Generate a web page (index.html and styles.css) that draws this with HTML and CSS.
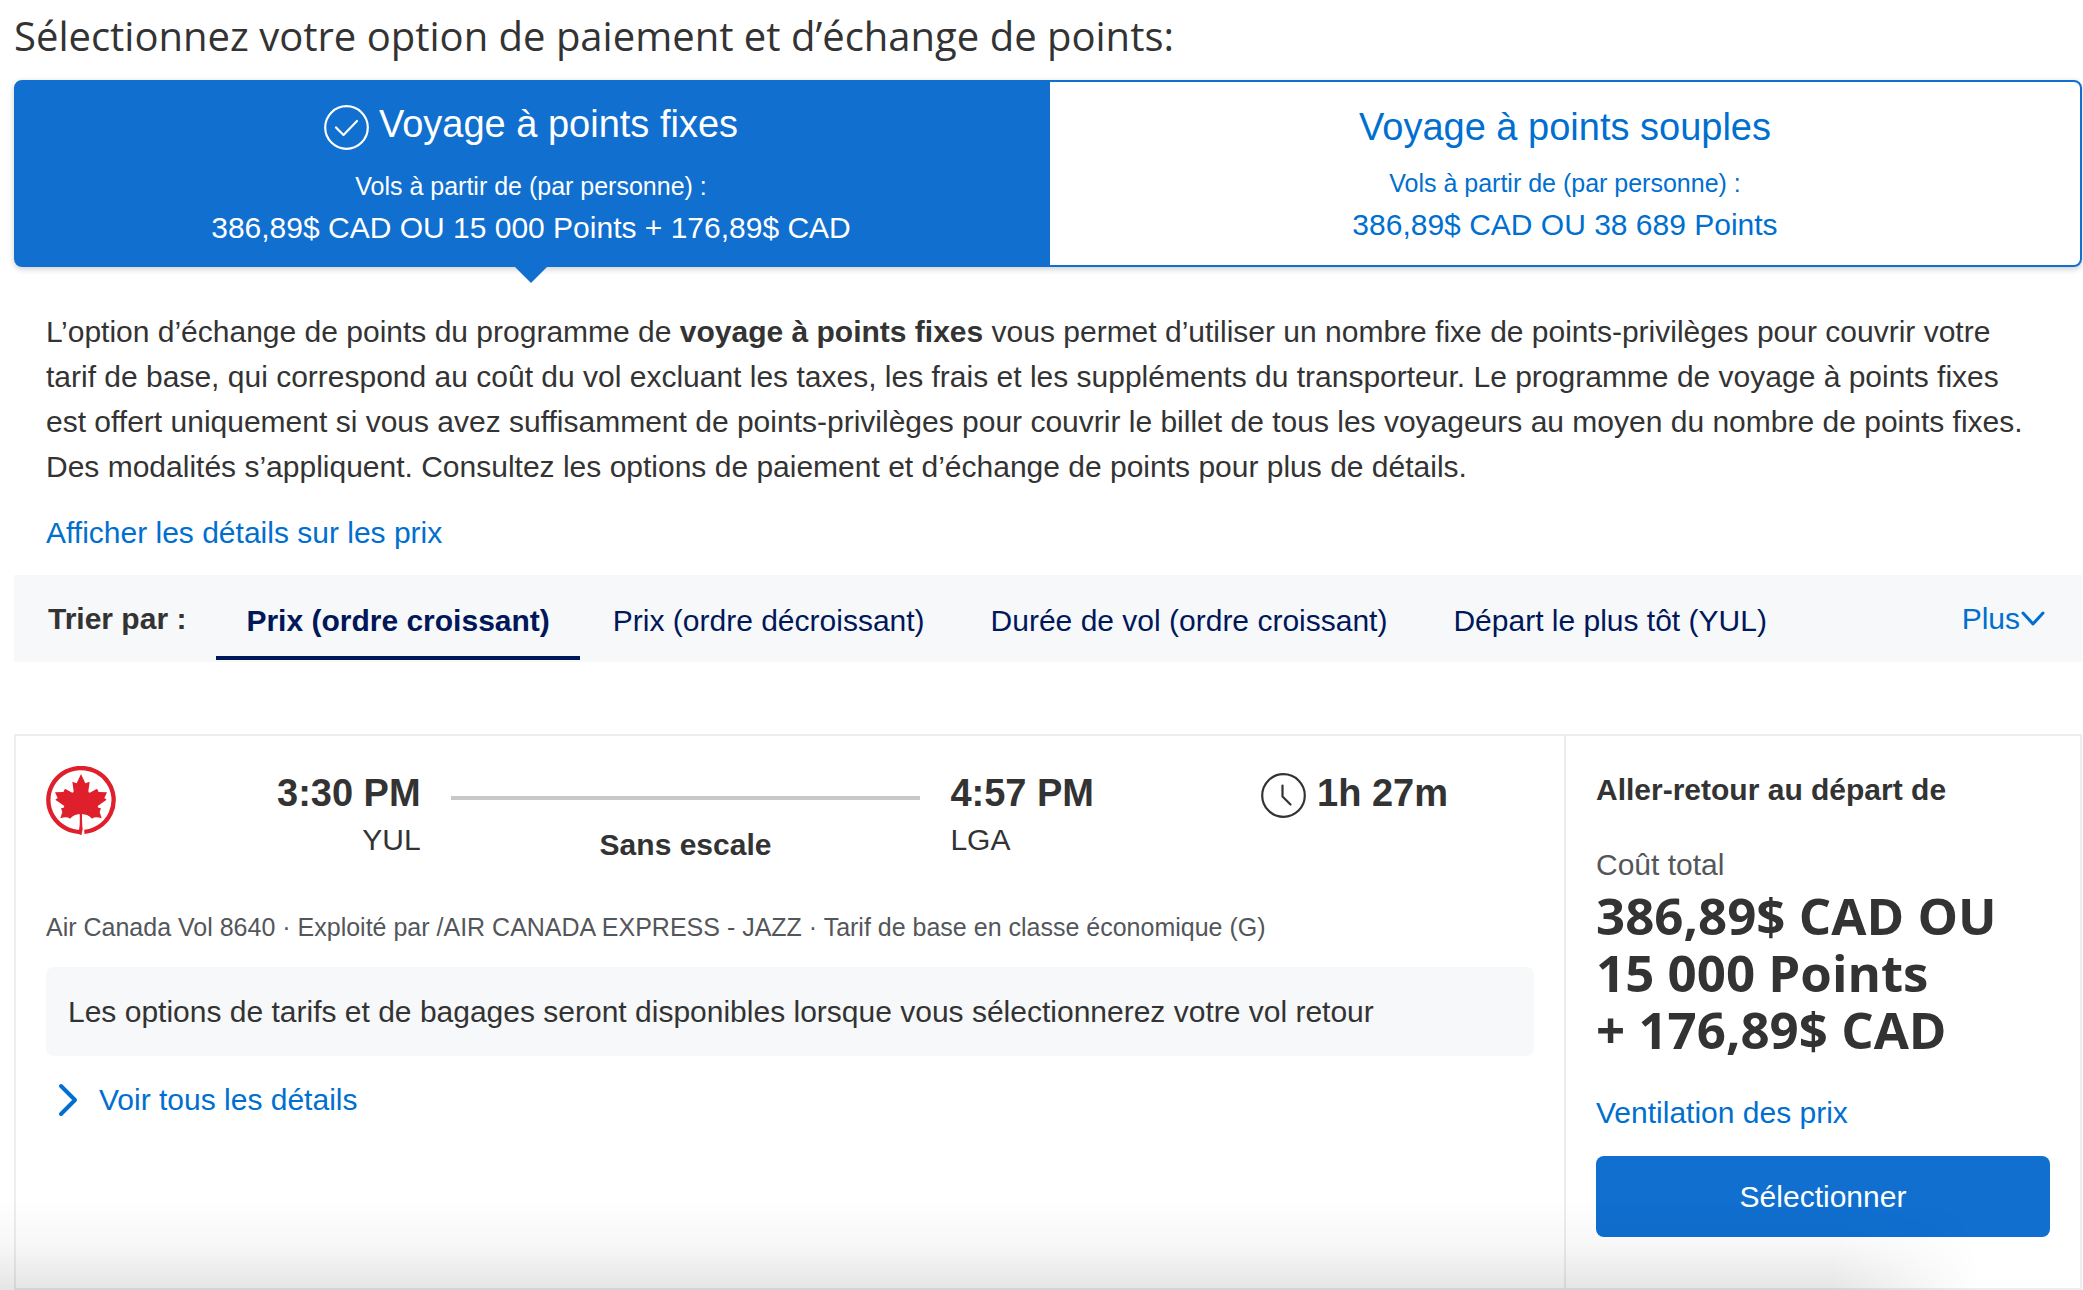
FILE: index.html
```html
<!DOCTYPE html>
<html lang="fr-CA">
<head>
  <meta charset="UTF-8">
  <meta name="viewport" content="width=device-width, initial-scale=1.0">
  <title>Résultats de vols</title>
  <link rel="stylesheet" href="styles.css">
</head>
<body>
  <h1 class="page-title">Sélectionnez votre option de paiement et d’échange de points:</h1>

  <div class="options">
    <button type="button" class="option option-active" aria-pressed="true">
      <span class="option-title">
        <svg class="icon-round" viewBox="0 0 45 45" aria-hidden="true">
          <circle cx="22.5" cy="22.5" r="21.3"/>
          <path d="M12 22.5l7.5 7.5 13.5-14"/>
        </svg>
        Voyage à points fixes
      </span>
      <span class="option-sub">Vols à partir de (par personne) :</span>
      <span class="option-price">386,89$ CAD OU 15 000 Points + 176,89$ CAD</span>
    </button>
    <button type="button" class="option" aria-pressed="false">
      <span class="option-title">Voyage à points souples</span>
      <span class="option-sub">Vols à partir de (par personne) :</span>
      <span class="option-price">386,89$ CAD OU 38 689 Points</span>
    </button>
  </div>

  <section class="description">
    <p>L’option d’échange de points du programme de <strong>voyage à points fixes</strong> vous permet d’utiliser un nombre fixe de points-privilèges pour couvrir votre tarif de base, qui correspond au coût du vol excluant les taxes, les frais et les suppléments du transporteur. Le programme de voyage à points fixes est offert uniquement si vous avez suffisamment de points-privilèges pour couvrir le billet de tous les voyageurs au moyen du nombre de points fixes. Des modalités s’appliquent. Consultez les options de paiement et d’échange de points pour plus de détails.</p>
    <a href="#">Afficher les détails sur les prix</a>
  </section>

  <nav class="sort-bar">
    <span class="sort-label">Trier par :</span>
    <button type="button" class="sort-tab sort-tab-active">Prix (ordre croissant)</button>
    <button type="button" class="sort-tab">Prix (ordre décroissant)</button>
    <button type="button" class="sort-tab">Durée de vol (ordre croissant)</button>
    <button type="button" class="sort-tab">Départ le plus tôt (YUL)</button>
    <button type="button" class="sort-more">Plus<svg viewBox="0 0 26 18" aria-hidden="true"><path d="M3 3l10 11 10-11"/></svg></button>
  </nav>

  <article class="flight">
    <div class="flight-main">
      <div class="flight-row">
        <svg class="airline-logo" viewBox="0 0 210 210" role="img" aria-label="Air Canada">
          <path class="logo-ring" d="M105 198A98 96 0 1 1 115 197.5"/>
          <path class="logo-leaf" d="M105 24L118 52L131 47L127 76Q128 82 134 79L153 68L158 78L183 79L175 96L182 101L155 120L157 125L165 127L161 138L167 157Q148 150 138 158Q126 145 108 144Q108 176 110 190L106 208L94 202Q103 196 101 144Q84 145 72 158Q62 150 43 157L49 138L45 127L53 125L55 120L28 101L35 96L27 79L52 78L57 68L76 79Q82 82 83 76L79 47L92 52Z"/>
        </svg>
        <div class="stop stop-from">
          <strong>3:30 PM</strong>
          <span>YUL</span>
        </div>
        <div class="route">
          <div class="route-line"></div>
          <strong>Sans escale</strong>
        </div>
        <div class="stop">
          <strong>4:57 PM</strong>
          <span>LGA</span>
        </div>
        <div class="duration">
          <svg class="icon-round" viewBox="0 0 45 45" aria-hidden="true">
            <circle cx="22.5" cy="22.5" r="21.3"/>
            <path d="M21.5 12.5v11l8 8"/>
          </svg>
          <strong>1h 27m</strong>
        </div>
      </div>
      <p class="flight-info">Air Canada Vol 8640 · Exploité par /AIR CANADA EXPRESS - JAZZ · Tarif de base en classe économique (G)</p>
      <p class="notice">Les options de tarifs et de bagages seront disponibles lorsque vous sélectionnerez votre vol retour</p>
      <a class="details" href="#">
        <svg viewBox="0 0 22 34" aria-hidden="true"><path d="M4 3l14 14L4 31"/></svg>
        Voir tous les détails
      </a>
    </div>

    <aside class="fare">
      <h2 class="fare-title">Aller-retour au départ de</h2>
      <p class="fare-label">Coût total</p>
      <p class="fare-price">386,89$ CAD OU<br>15 000 Points<br>+ 176,89$ CAD</p>
      <a class="fare-link" href="#">Ventilation des prix</a>
      <button type="button" class="btn-select">Sélectionner</button>
    </aside>
  </article>
</body>
</html>
```

FILE: styles.css
```css
* {
  box-sizing: border-box;
  margin: 0;
  padding: 0;
}

body {
  position: relative;
  display: flex;
  flex-direction: column;
  min-height: 100vh;
  padding: 10px 1px 0 14px;
  background-color: #fff;
  color: #333;
  font-family: "Liberation Sans", Arial, sans-serif;
  font-size: 30px;
  line-height: 45px;
}

/* soft shadow along the bottom of the window */
body::after {
  content: "";
  position: absolute;
  left: 0;
  right: 0;
  bottom: 0;
  height: 90px;
  background: linear-gradient(to bottom, rgba(0, 0, 0, 0), rgba(0, 0, 0, 0.03) 50%, rgba(0, 0, 0, 0.1));
  -webkit-mask-image: linear-gradient(to right, #000 88%, transparent 95%);
  mask-image: linear-gradient(to right, #000 88%, transparent 95%);
  pointer-events: none;
}

a {
  color: #006fcf;
  text-decoration: none;
}

button {
  border: none;
  background: none;
  color: inherit;
  font: inherit;
  cursor: pointer;
}

svg {
  flex-shrink: 0;
  fill: none;
  stroke: currentColor;
  stroke-linecap: round;
  stroke-linejoin: round;
}

.page-title {
  font-family: "Open Sans", sans-serif;
  font-size: 40px;
  font-weight: 400;
  line-height: 52px;
}

.icon-round {
  width: 45px;
  height: 45px;
  stroke-width: 2.2;
}

/* Payment options */
.options {
  display: grid;
  grid-template-columns: 1fr 1fr;
  margin-top: 18px;
  border-radius: 8px;
  box-shadow: 0 2px 6px rgba(0, 0, 0, 0.2);
}

.option {
  position: relative;
  display: flex;
  flex-direction: column;
  justify-content: flex-start;
  align-items: center;
  padding: 21px 0 13px;
  border: 2px solid #106fcf;
  border-radius: 0 8px 8px 0;
  background-color: #fff;
  color: #006fcf;
}

.option-active {
  border-radius: 8px 0 0 8px;
  background-color: #106fcf;
  color: #fff;
}

.option-active::after {
  content: "";
  position: absolute;
  top: 100%;
  left: 50%;
  margin-left: -18px;
  border: 18px solid transparent;
  border-top-color: #106fcf;
  border-bottom: none;
}

.option-title {
  display: flex;
  gap: 10px;
  font-size: 38px;
  line-height: 48px;
}

.option-active .option-title {
  padding-bottom: 4px;
  line-height: 42px;
}

.option-title svg {
  margin-top: 2px;
}

.option-sub {
  margin-top: 14px;
  font-size: 25px;
  line-height: 36px;
}

.option-price {
  line-height: 48px;
}

/* Description */
.description {
  padding: 42px 45px 20px 32px;
}

.description a {
  display: inline-block;
  margin-top: 21px;
}

/* Sorting */
.sort-bar {
  display: flex;
  align-items: center;
  height: 87px;
  padding: 0 36px 0 34px;
  background-color: #f7f8f9;
}

.sort-label {
  margin-right: 30px;
  font-weight: 700;
}

.sort-tab {
  height: 83px;
  padding: 8px 33px 0;
  border-bottom: 4px solid transparent;
  color: #00175a;
}

.sort-tab-active {
  padding: 8px 30px 0;
  border-bottom-color: #00175a;
  font-weight: 700;
}

.sort-more {
  display: flex;
  align-items: center;
  margin-left: auto;
  color: #006fcf;
}

.sort-more svg {
  width: 26px;
  height: 18px;
  stroke-width: 3;
}

/* Flight card */
.flight {
  flex: 1;
  display: grid;
  grid-template-columns: 3fr 1fr;
  margin-top: 72px;
  border: 2px solid #ecedee;
}

.flight-main {
  padding: 30px;
}

.flight-row {
  display: flex;
  align-items: flex-start;
}

.airline-logo {
  width: 70px;
  height: 70px;
  margin-right: 161px;
}

.logo-ring {
  stroke: #e01f2d;
  stroke-width: 13;
  stroke-linecap: butt;
}

.logo-leaf {
  fill: #e01f2d;
  stroke: none;
}

.stop {
  display: flex;
  flex-direction: column;
}

.stop strong,
.duration strong {
  font-size: 38px;
  line-height: 54px;
}

.stop span {
  line-height: 40px;
}

.stop-from {
  text-align: right;
}

.route {
  flex: 1;
  margin: 30px 30px 0;
  text-align: center;
}

.route-line {
  height: 4px;
  margin-bottom: 22px;
  background-color: #c8c9c7;
}

.duration {
  display: flex;
  align-items: center;
  gap: 11px;
  margin: 0 86px 0 167px;
}

.duration svg {
  margin-top: 4px;
}

.flight-info {
  margin-top: 38px;
  color: #53565a;
  font-size: 25px;
}

.notice {
  margin-top: 17px;
  padding: 22px;
  border-radius: 8px;
  background-color: #f7f8f9;
}

.details {
  display: inline-flex;
  align-items: center;
  gap: 20px;
  margin-top: 21px;
  padding-left: 11px;
}

.details svg {
  width: 22px;
  height: 34px;
  stroke-width: 4;
}

.fare {
  padding: 31px 30px;
  border-left: 2px solid #ecedee;
}

.fare-title {
  font-size: 30px;
}

.fare-label {
  margin-top: 30px;
  color: #53565a;
}

.fare-price {
  font-family: "Open Sans", sans-serif;
  font-size: 51px;
  font-weight: 700;
  line-height: 57px;
}

.fare-link {
  display: inline-block;
  margin-top: 32px;
}

.btn-select {
  display: block;
  width: 100%;
  height: 81px;
  margin-top: 21px;
  border-radius: 8px;
  background-color: #106fcf;
  color: #fff;
}
```
